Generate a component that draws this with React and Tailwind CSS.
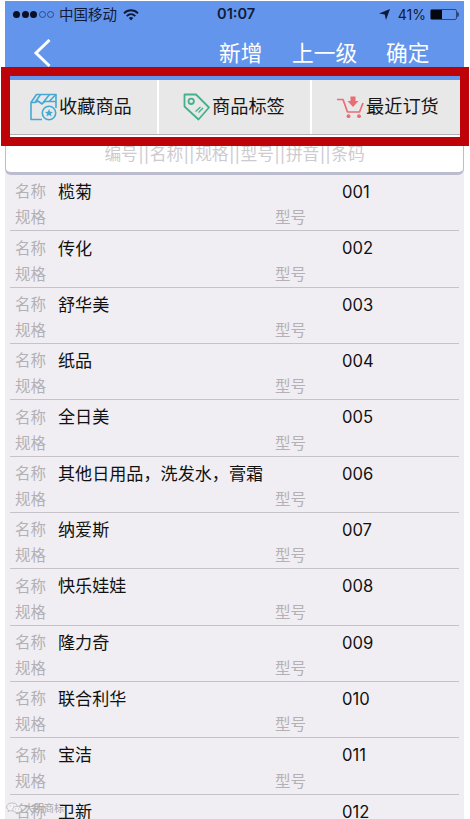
import React from 'react';

const products = [
  { name: '榄菊', code: '001' },
  { name: '传化', code: '002' },
  { name: '舒华美', code: '003' },
  { name: '纸品', code: '004' },
  { name: '全日美', code: '005' },
  { name: '其他日用品，洗发水，膏霜', code: '006' },
  { name: '纳爱斯', code: '007' },
  { name: '快乐娃娃', code: '008' },
  { name: '隆力奇', code: '009' },
  { name: '联合利华', code: '010' },
  { name: '宝洁', code: '011' },
  { name: '卫新', code: '012' },
];

const searchFields = ['编号', '名称', '规格', '型号', '拼音', '条码'];

const BoxIcon = () => (
  <svg className="w-[27px] h-[28px] shrink-0" viewBox="0 0 27 28" fill="none" stroke="#45a9d3" strokeWidth="1.6" strokeLinejoin="round">
    <path d="M12 26.500H1V9.500L6.500 1.500H26V15" />
    <path d="M1 9.500h4L10.500 1.500M5 9.500l3-1.500 4 3 7.500-9.500M12 11l3-2.500h4L26 1.500M19 8.500h7" />
    <circle cx="19" cy="20" r="6.700" />
    <path d="M19 16l1.200 2.700 2.800.3-2.100 1.800.7 2.700-2.600-1.400-2.600 1.400.7-2.700-2.100-1.800 2.800-.3z" fill="#45a9d3" stroke="none" />
  </svg>
);

const TagIcon = () => (
  <svg className="w-[27px] h-[28px] shrink-0" viewBox="0 0 27 28" fill="none" stroke="#43b18c" strokeWidth="1.8" strokeLinejoin="round">
    <path d="M1.500 1.500H13L26 14.500 15.500 26.500 1.500 13.500z" />
    <circle cx="8.200" cy="8.300" r="2.700" />
    <path d="M12.500 18.500l5-4.500M15.500 19.500l4.500-4.500" strokeWidth="1.400" />
  </svg>
);

const CartIcon = () => (
  <svg className="w-[27px] h-[24px] shrink-0" viewBox="0 0 27 24" fill="none" stroke="#e96d73" strokeWidth="1.7" strokeLinejoin="round">
    <path d="M0 4.500h6l4.500 12.500h12L26 8" />
    <path d="M13.500 1.500h5V6h3L16 12l-5.500-6h3z" fill="#e96d73" stroke="none" />
    <circle cx="11.500" cy="21.200" r="1.900" fill="#e96d73" stroke="none" />
    <circle cx="22" cy="21.200" r="1.900" fill="#e96d73" stroke="none" />
  </svg>
);

const tabs = [
  { label: '收藏商品', Icon: BoxIcon, cell: 'w-[154px] pl-[25px] border-r-2' },
  { label: '商品标签', Icon: TagIcon, cell: 'w-[153px] pl-[24px] border-r-2' },
  { label: '最近订货', Icon: CartIcon, cell: 'flex-1 pl-[25px]' },
];

const StatusBar = () => (
  <div className="h-[27px] flex items-center text-[#111b38] text-[14px]">
    <div className="w-[212px] pl-[8px] flex items-center">
      <div className="flex gap-[1.500px] mr-[5px]">
        {[1, 1, 1, 0, 0].map((on, i) => (
          <span key={i} className={on ? 'size-[7px] rounded-full bg-[#0b1024]' : 'size-[7px] rounded-full border border-[#294987]'} />
        ))}
      </div>
      <span className="text-[14.500px]">中国移动</span>
      <svg className="w-[16px] h-[12px] ml-[6px]" viewBox="0 0 16 12" fill="none" stroke="#101a38" strokeWidth="1.900">
        <path d="M1 4.300c4-4 10-4 14 0M3.700 7.100c2.500-2.400 6.100-2.400 8.600 0" />
        <path d="M5.800 9c1.300-1.200 3.100-1.200 4.400 0L8 11.500z" fill="#101a38" stroke="none" />
      </svg>
    </div>
    <span className="font-semibold text-[14.600px]">01:07</span>
    <div className="ml-auto pr-[5px] flex items-center">
      <svg className="w-[11px] h-[11px] mr-[8px]" viewBox="0 0 11 11" fill="#101a38">
        <path d="M11 0L7 11 5.700 5.500 0 4.500z" />
      </svg>
      <span className="text-[14px]">41%</span>
      <div className="ml-[4px] w-[27px] h-[11px] border border-[#2c4780] rounded-[2px]">
        <div className="w-[11px] h-full bg-[#05070f]" />
      </div>
      <div className="w-[2px] h-[5px] bg-[#2c4780] rounded-r" />
    </div>
  </div>
);

const ProductRow = ({ name, code }) => (
  <div className="h-[56.340px] shrink-0 mx-[5px] pl-[5px] pt-[4px] border-b border-[#c5c3c8] text-[15.500px] text-[#b3b1b5]">
    <div className="h-[26px] flex items-center">
      <span className="w-[43px]">名称</span>
      <span className="w-[284px] text-[17.100px] text-[#111]">{name}</span>
      <span className="pt-px text-[16.600px] text-[#111]">{code}</span>
    </div>
    <div className="h-[26px] flex items-center">
      <span className="w-[260px]">规格</span>
      <span>型号</span>
    </div>
  </div>
);

const Watermark = () => (
  <div className="absolute left-[6px] top-[801px] flex items-center gap-[2px] text-[10px] leading-[14px] text-[#a9a7ac]">
    <svg className="w-[16px] h-[12px]" viewBox="0 0 16 12" fill="#f4f3f5" stroke="#bbb9bd" strokeWidth="0.900">
      <path d="M2 9.500L2.500 8C-1 5.500 1 1 6 1s7 3.500 4.500 6S5 9 4 8.500z" />
      <path d="M14.500 11l-.4-1.300C17 7.500 14.500 4.300 11 4.300S5.500 7 7.500 9s4 1.500 5.300 1.200z" />
      <path d="M4 3.500v1M7.500 3.500v1M9.500 6.500v1M12.500 6.500v1" />
    </svg>
    <span>大明商标</span>
  </div>
);

const App = () => {
  return (
    <div className="relative w-[470px] h-[819px] overflow-hidden bg-white pt-px whitespace-nowrap font-['Inter','Noto_Sans_CJK_SC',sans-serif]">
      <div className="ml-[5px] w-[459px] h-[818px] overflow-hidden bg-[#f0eef2] flex flex-col">
        <header className="h-[79px] shrink-0 bg-[#6495ed]">
          <StatusBar />
          <div className="h-[51px] flex items-center text-white text-[21.700px]">
            <svg className="w-[18px] h-[30px] ml-[28px] mr-[168px]" viewBox="0 0 18 30" fill="none" stroke="white" strokeWidth="3">
              <path d="M16.500 1L3 14l13.500 13" />
            </svg>
            <span className="w-[73px]">新增</span>
            <span className="w-[94px]">上一级</span>
            <span>确定</span>
          </div>
        </header>

        <nav className="h-[55px] shrink-0 flex bg-[#e9e8e8] border-b border-[#b3b1b3]">
          {tabs.map(({ label, Icon, cell }) => (
            <div key={label} className={`flex items-center gap-[2px] border-white text-[18.200px] text-[#161616] ${cell}`}>
              <Icon />
              <span>{label}</span>
            </div>
          ))}
        </nav>

        <div className="h-[40px] shrink-0 bg-white border-b-3 border-x border-[#bcbccf] rounded-b-md flex justify-center pt-[7px]">
          <div className="flex text-[16.700px] leading-[24px] text-[#cdcbd0]">
            {searchFields.map((field, i) => (
              <span key={field}>
                {i > 0 && <span className="inline-block w-[12px] text-center">||</span>}
                {field}
              </span>
            ))}
          </div>
        </div>

        {products.map((p) => (
          <ProductRow key={p.code} {...p} />
        ))}
      </div>

      {/* highlight around the tab bar */}
      <div className="absolute left-px top-[67px] w-[468px] h-[79px] border-[9px] border-[#bd0208]" />
      <Watermark />
    </div>
  );
};

export default App;
